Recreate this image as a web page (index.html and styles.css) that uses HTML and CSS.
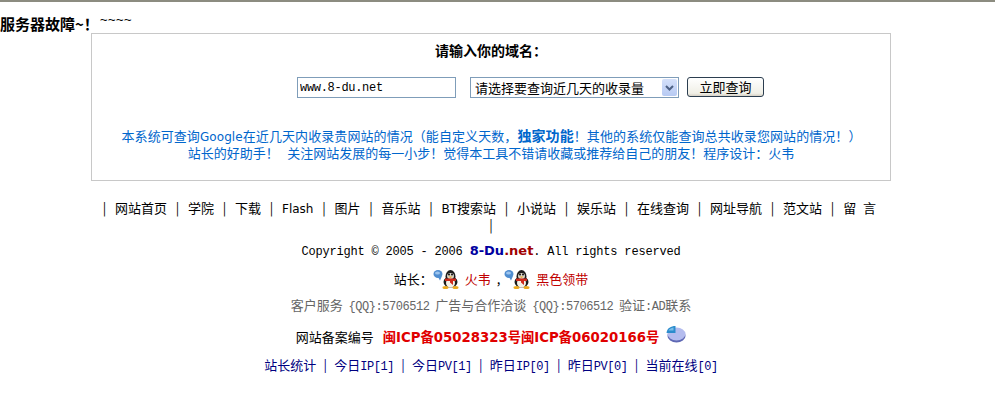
FILE: index.html
```html
<!DOCTYPE html>
<html>
<head>
  <meta charset="UTF-8">
  <title>收录查询</title>
  <link rel="stylesheet" href="styles.css">
</head>
<body>
  <svg class="icon-defs">
    <symbol id="qq" viewBox="0 0 28 20">
      <ellipse cx="5" cy="5" rx="4.5" ry="4" fill="#4f8dd0"/>
      <ellipse cx="4.5" cy="4" rx="2.5" ry="1.5" fill="#9cc4ee"/>
      <path d="M5 8l2 3.5L9 7z" fill="#4f8dd0"/>
      <ellipse cx="17.5" cy="7.5" rx="5" ry="6.5" fill="#1c1c1c"/>
      <ellipse cx="17.5" cy="13" rx="7" ry="5.5" fill="#1c1c1c"/>
      <ellipse cx="17.5" cy="14" rx="4.5" ry="4.5" fill="#f4f1e6"/>
      <ellipse cx="17.5" cy="7" rx="3.5" ry="3" fill="#d8d4c8"/>
      <circle cx="16" cy="5.5" r="1" fill="#111"/>
      <circle cx="19" cy="5.5" r="1" fill="#111"/>
      <path d="M15.5 7.5h4l-2 1.5z" fill="#eba91f"/>
      <path d="M12 9.5h11v2.5h-3v4l-3-2.5v-1.5h-5z" fill="#cf2a1c"/>
      <ellipse cx="12.5" cy="18.5" rx="3" ry="1.5" fill="#eba91f"/>
      <ellipse cx="22.5" cy="18.5" rx="3" ry="1.5" fill="#eba91f"/>
    </symbol>
  </svg>

  <div class="error-line"><strong>服务器故障~！</strong><span class="tildes">~~~~</span></div>

  <div class="search-box">
    <div class="box-title">请输入你的域名：</div>
    <form class="search-form">
      <input class="domain-input" type="text" value="www.8-du.net">
      <div class="fake-select">
        <span>请选择要查询近几天的收录量</span>
        <span class="select-arrow">
          <svg width="9" height="6" viewBox="0 0 9 6"><path d="M1 1l3.5 3.5L8 1" fill="none" stroke="#4d6185" stroke-width="2"/></svg>
        </span>
      </div>
      <button class="search-btn" type="button">立即查询</button>
    </form>
    <div class="box-note">
      <div class="note-first">本系统可查询<span class="latin">Google</span>在近几天内收录贵网站的情况（能自定义天数，<strong>独家功能</strong>！其他的系统仅能查询总共收录您网站的情况！）</div>
      <div>站长的好助手！&nbsp;&nbsp;&nbsp;关注网站发展的每一小步！觉得本工具不错请收藏或推荐给自己的朋友！程序设计：火韦</div>
    </div>
  </div>

  <div class="footer">
    <div class="nav-links"><span class="sep">|</span>网站首页<span class="sep">|</span>学院<span class="sep">|</span>下载<span class="sep">|</span><span class="latin">Flash</span><span class="sep">|</span>图片<span class="sep">|</span>音乐站<span class="sep">|</span><span class="latin">BT</span>搜索站<span class="sep">|</span>小说站<span class="sep">|</span>娱乐站<span class="sep">|</span>在线查询<span class="sep">|</span>网址导航<span class="sep">|</span>范文站<span class="sep">|</span><span class="guestbook">留 言</span><span class="sep">|</span></div>
    <div class="copyright">Copyright © 2005 - 2006 <b class="brand"><span class="brand-blue">8-Du</span><span class="brand-red">.net</span></b>. All rights reserved</div>
    <div class="owners">站长：<svg class="qq-icon" width="28" height="20"><use href="#qq"/></svg><a class="owner-link" href="#">火韦</a><span class="comma">,</span><svg class="qq-icon" width="28" height="20"><use href="#qq"/></svg><a class="owner-link" href="#">黑色领带</a></div>
    <div class="service">客户服务&nbsp;&nbsp;<span class="num">{QQ}:5706512</span>&nbsp;&nbsp;广告与合作洽谈&nbsp;&nbsp;<span class="num">{QQ}:5706512</span>&nbsp;&nbsp;验证<span class="num">:AD</span>联系</div>
    <div class="record">网站备案编号<b class="record-no">闽ICP备05028323号闽ICP备06020166号</b>
      <svg class="pie-icon" width="20" height="18" viewBox="0 0 20 18">
        <ellipse cx="10.5" cy="11" rx="9" ry="6.5" fill="#5f68b4"/>
        <ellipse cx="10.5" cy="9" rx="9" ry="6.5" fill="#b4bcee"/>
        <path d="M9.5 8V1C5 1 1 3 .5 8z" fill="#2b8ccc"/>
        <path d="M7.5 5.5V2.5C5 3 3 4 2.5 5.5z" fill="#79bdea"/>
      </svg>
    </div>
    <div class="stats">站长统计<span class="sep">|</span>今日<span class="num">IP[1]</span><span class="sep">|</span>今日<span class="num">PV[1]</span><span class="sep">|</span>昨日<span class="num">IP[0]</span><span class="sep">|</span>昨日<span class="num">PV[0]</span><span class="sep">|</span>当前在线<span class="num">[0]</span></div>
  </div>
</body>
</html>
```

FILE: styles.css
```css
html, body {
  margin: 0;
  padding: 0;
}
body {
  font-family: "Noto Sans CJK SC", sans-serif;
  font-size: 13px;
  color: #000;
  background: #fff;
  border-top: 2px solid #8c8c80;
  overflow: hidden;
}
.icon-defs {
  display: none;
}
.latin {
  font-family: "DejaVu Sans", sans-serif;
  font-size: 12px;
}
.num {
  font-family: "Liberation Mono", monospace;
  font-size: 12px;
  letter-spacing: -.45px;
}
.error-line {
  display: flex;
  align-items: flex-start;
  height: 31px;
  padding-top: 14px;
  box-sizing: border-box;
  line-height: 16px;
}
.error-line strong {
  font-size: 15px;
}
.tildes {
  margin: -3px 0 0 1px;
  font-family: "Liberation Mono", monospace;
  font-size: 13.33px;
}
.search-box {
  width: 800px;
  height: 148px;
  margin-left: 91px;
  border: 1px solid #c8c8c8;
  box-sizing: border-box;
  text-align: center;
}
.box-title {
  margin-top: 7px;
  font-size: 14px;
  font-weight: bold;
  line-height: 18px;
}
.search-form {
  display: flex;
  justify-content: center;
  align-items: flex-start;
  margin-top: 18px;
  padding-left: 79px;
}
.domain-input {
  width: 159px;
  height: 21px;
  box-sizing: border-box;
  margin: 0 14px 0 0;
  padding: 0 2px;
  border: 1px solid #7f9db9;
  border-radius: 0;
  font-family: "Liberation Mono", monospace;
  font-size: 12px;
  letter-spacing: -.3px;
  outline: none;
}
.fake-select {
  display: flex;
  align-items: center;
  justify-content: space-between;
  width: 209px;
  height: 21px;
  box-sizing: border-box;
  margin-right: 8px;
  padding: 1px 1px 1px 4px;
  border: 1px solid #7f9db9;
  line-height: 16px;
}
.select-arrow {
  display: flex;
  align-items: center;
  justify-content: center;
  width: 15px;
  height: 17px;
  border-radius: 2px;
  background: linear-gradient(#d4e0fa, #b7caf3);
}
.search-btn {
  width: 77px;
  height: 20px;
  padding: 0;
  border: 1px solid #2c3e50;
  border-radius: 3px;
  background: linear-gradient(#fff, #f0efe6 85%, #d6d0c5);
  font-family: "Noto Sans CJK SC", sans-serif;
  font-size: 13px;
  line-height: 16px;
}
.box-note {
  margin-top: 30px;
  color: #0066cc;
  line-height: 15px;
}
.box-note strong {
  font-size: 14px;
}
.note-first {
  margin-left: 1px;
  letter-spacing: .08px;
}
.footer {
  width: 800px;
  margin-left: 91px;
  text-align: center;
}
.sep {
  display: inline-block;
  width: 21px;
  text-align: center;
}
.nav-links {
  height: 32px;
  margin-top: 19px;
  line-height: 16px;
}
.guestbook {
  margin-right: 12px;
  word-spacing: 4px;
  white-space: nowrap;
}
.copyright {
  height: 16px;
  margin-top: 11px;
  line-height: 16px;
  font-family: "Liberation Mono", "Noto Sans CJK SC", monospace;
  font-size: 12px;
  letter-spacing: -.2px;
}
.brand {
  font-family: "DejaVu Sans", sans-serif;
  font-size: 13px;
  letter-spacing: 0;
}
.brand-blue {
  color: #0000a0;
}
.brand-red {
  color: #a00000;
}
.owners {
  height: 26px;
  margin-top: 7px;
  line-height: 26px;
}
.qq-icon {
  margin: -5px 4px -5px 0;
  vertical-align: 0;
}
.comma {
  margin: 0 4px 0 6px;
}
.owner-link {
  color: #c00000;
  text-decoration: none;
}
.service {
  height: 16px;
  margin-top: 5px;
  color: #666;
  line-height: 16px;
}
.record {
  height: 20px;
  margin-top: 14px;
  line-height: 20px;
}
.record-no {
  margin-left: 9px;
  font-family: "DejaVu Sans", "Noto Sans CJK SC", sans-serif;
  font-size: 13.3px;
  color: #e00000;
}
.pie-icon {
  margin: -5px 0 -5px 4px;
  vertical-align: 4px;
}
.stats {
  height: 16px;
  margin-top: 10px;
  color: #000080;
  line-height: 16px;
}
.stats .sep {
  width: 18px;
}
```
